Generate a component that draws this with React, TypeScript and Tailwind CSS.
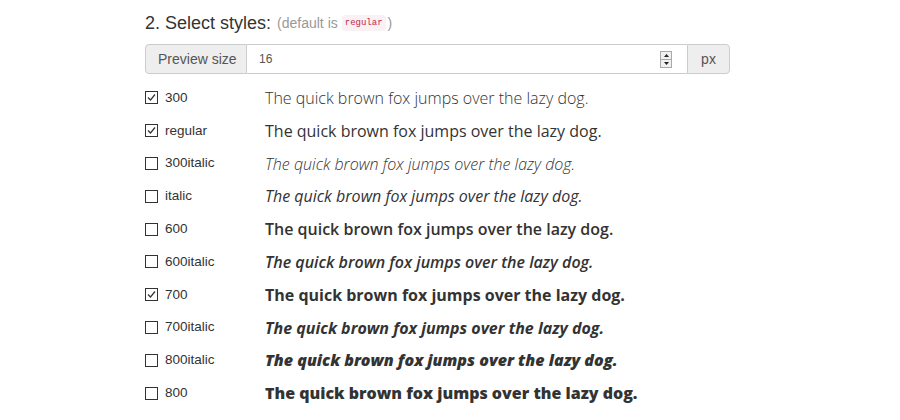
import React from 'react'

const STYLES: { name: string; weight: number; italic: boolean; checked: boolean }[] = [
  { name: '300', weight: 300, italic: false, checked: true },
  { name: 'regular', weight: 400, italic: false, checked: true },
  { name: '300italic', weight: 300, italic: true, checked: false },
  { name: 'italic', weight: 400, italic: true, checked: false },
  { name: '600', weight: 600, italic: false, checked: false },
  { name: '600italic', weight: 600, italic: true, checked: false },
  { name: '700', weight: 700, italic: false, checked: true },
  { name: '700italic', weight: 700, italic: true, checked: false },
  { name: '800italic', weight: 800, italic: true, checked: false },
  { name: '800', weight: 800, italic: false, checked: false },
]

function Box({ checked }: { checked: boolean }) {
  return (
    <span className="flex h-[13px] w-[13px] items-center justify-center border border-[#333] bg-white">
      {checked && (
        <svg width="11" height="11" viewBox="0 0 11 11">
          <path d="M2 5.5 L4.5 8 L9 2.5" fill="none" stroke="#333" strokeWidth="1.2" />
        </svg>
      )}
    </span>
  )
}

function Spinner() {
  return (
    <span className="flex h-[17px] w-[12px] flex-col border border-[#a9a9a9] bg-[#f0f0f0]">
      <span className="flex flex-1 items-center justify-center border-b border-[#a9a9a9]">
        <svg width="5" height="3" viewBox="0 0 5 3"><path d="M0 3 L2.5 0 L5 3 Z" fill="#222" /></svg>
      </span>
      <span className="flex flex-1 items-center justify-center">
        <svg width="5" height="3" viewBox="0 0 5 3"><path d="M0 0 L2.5 3 L5 0 Z" fill="#222" /></svg>
      </span>
    </span>
  )
}

export default function App() {
  return (
    <div className="h-[420px] w-[900px] bg-white pl-[145px] font-['Liberation_Sans',Arial,sans-serif] text-[#333]">
      <div className="flex h-[44px] items-center gap-[6px] pt-[2px]">
        <span className="text-[18px] leading-none">2. Select styles:</span>
        <span className="flex items-center text-[14px] leading-none text-[#999]">
          (default is
          <code className="ml-[4px] mr-[2px] rounded-[3px] bg-[#f9f2f4] px-[3px] py-[3.5px] font-['Liberation_Mono',monospace] text-[9px] leading-none text-[#c7254e]">regular</code>
          )
        </span>
      </div>

      <div className="flex h-[30px] w-[585px] text-[14px] text-[#555]">
        <div className="flex w-[102px] items-center rounded-l-[4px] border border-[#ccc] bg-[#eee] pl-[12px]">Preview size</div>
        <div className="flex flex-1 items-center justify-between border-y border-[#ccc] bg-white pl-[12px] pr-[15px] text-[12px]">
          <span>16</span>
          <Spinner />
        </div>
        <div className="flex w-[43px] items-center justify-center rounded-r-[4px] border border-[#ccc] bg-[#eee]">px</div>
      </div>

      <div className="mt-[7.6px] flex flex-col">
        {STYLES.map(s => (
          <div key={s.name} className="flex h-[32.8px] items-center">
            <div className="flex w-[120px] items-center gap-[7px] text-[13.5px]">
              <Box checked={s.checked} />
              <span>{s.name}</span>
            </div>
            <span
              className={`font-['Open_Sans',sans-serif] text-[16px] text-[#333] ${s.italic ? 'italic' : ''}`}
              style={{ fontWeight: s.weight }}
            >
              The quick brown fox jumps over the lazy dog.
            </span>
          </div>
        ))}
      </div>
    </div>
  )
}
